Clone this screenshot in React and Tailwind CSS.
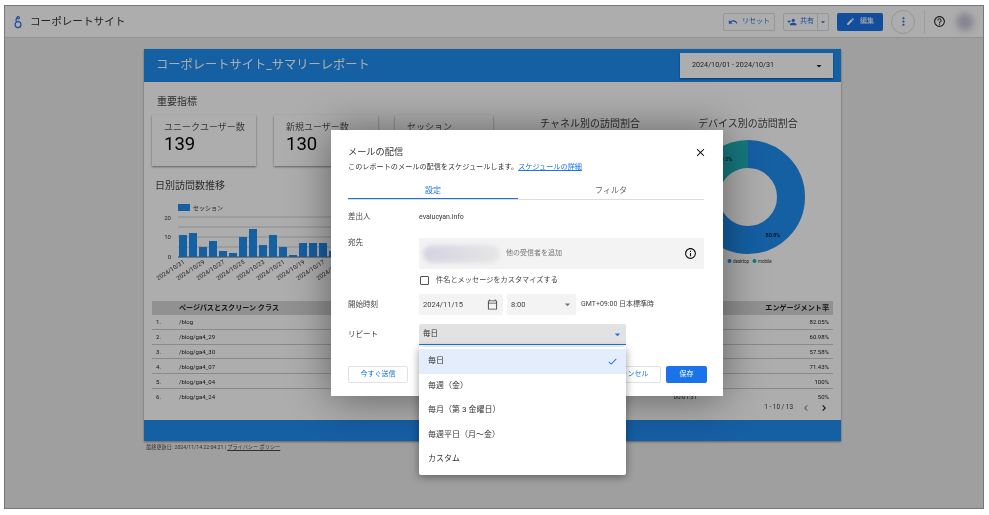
import { MdUndo, MdPersonAdd, MdEdit, MdMoreVert, MdHelpOutline, MdArrowDropDown, MdOutlineCalendarToday, MdClose, MdCheck, MdInfoOutline, MdChevronLeft, MdChevronRight } from 'react-icons/md'

const BLUE = '#1f8df0'
const TEAL = '#1fb3bc'
const bars = [11, 12, 5, 8, 3, 2, 10, 14, 6, 11, 5, 1, 7, 7, 7, 3, 6, 4, 5]
const dates = ['31', '29', '27', '25', '23', '21', '19', '17', '15']
const rows = [
  { path: '/blog', rate: '82.05%' },
  { path: '/blog/ga4_29', rate: '60.98%' },
  { path: '/blog/ga4_30', rate: '57.58%' },
  { path: '/blog/ga4_07', rate: '71.43%' },
  { path: '/blog/ga4_04', rate: '100%' },
  { path: '/blog/ga4_24', time: '00:01:31', rate: '50%' },
]
const options = ['毎日', '毎週（金）', '毎月（第 3 金曜日）', '毎週平日（月～金）', 'カスタム']

function Logo() {
  return (
    <svg width="10" height="14" viewBox="0 0 10 14" fill="none" stroke="#2f6fe0" strokeWidth="1.2" className="ml-[1px] mr-[-1px]">
      <circle cx="5" cy="9.6" r="3" />
      <path d="M3.6 6.8C2.4 5.2 3 3.4 4.6 2.6" />
      <circle cx="5.2" cy="2.8" r="1.2" />
    </svg>
  )
}

function Kpi({ label, value, className }) {
  return (
    <div className={`h-[51px] bg-white shadow-[0_1px_2px_rgba(0,0,0,.45)] pl-3 pt-[6px] ${className}`}>
      <div className="text-[9px] leading-[12px] text-[#555]">{label}</div>
      <div className="text-[18.5px] leading-[22px] text-black">{value}</div>
    </div>
  )
}

function BarChart() {
  return (
    <svg width="378" height="100" viewBox="0 0 378 100" className="block">
      <rect x="26" y="3" width="12" height="7" fill={BLUE} />
      <text x="41" y="9" fontSize="6" fill="#333">セッション</text>
      {[16, 26, 36, 46].map((y) => (
        <line key={y} x1="26" x2="378" y1={y} y2={y} stroke="#c4c4c4" strokeWidth="0.8" />
      ))}
      <line x1="26" x2="378" y1="56" y2="56" stroke="#333" strokeWidth="0.8" />
      <text x="19" y="19" fontSize="6" fill="#333" textAnchor="end">20</text>
      <text x="19" y="38" fontSize="6" fill="#333" textAnchor="end">10</text>
      <text x="19" y="58" fontSize="6" fill="#333" textAnchor="end">0</text>
      {bars.map((v, i) => (
        <rect key={i} x={27 + i * 10} y={56 - v * 2} width="8" height={v * 2} fill={BLUE} />
      ))}
      {dates.map((d, i) => (
        <text key={d} x={33 + i * 20} y="62" fontSize="6" fill="#333" textAnchor="end" transform={`rotate(-33 ${33 + i * 20} 62)`}>
          2024/10/{d}
        </text>
      ))}
    </svg>
  )
}

function Donut() {
  return (
    <svg width="130" height="145" viewBox="0 0 130 145" className="block">
      <g transform="rotate(-90 50 67)">
        <circle cx="50" cy="67" r="43" fill="none" stroke={BLUE} strokeWidth="28" pathLength="100" strokeDasharray="80.8 19.2" />
        <circle cx="50" cy="67" r="43" fill="none" stroke={TEAL} strokeWidth="28" pathLength="100" strokeDasharray="19.2 80.8" strokeDashoffset="-80.8" />
      </g>
      <text x="75" y="107" fontSize="5.5" fill="#000" textAnchor="middle">80.8%</text>
      <text x="27" y="31" fontSize="5.5" fill="#000" textAnchor="middle">19.2%</text>
      <circle cx="31.5" cy="131" r="2" fill={BLUE} />
      <text x="35" y="133" fontSize="4.5" fill="#333">desktop</text>
      <circle cx="56.5" cy="131" r="2" fill={TEAL} />
      <text x="60" y="133" fontSize="4.5" fill="#333">mobile</text>
    </svg>
  )
}

function Report() {
  return (
    <div className="ml-[139px] mt-[11px] w-[697px] bg-white shadow-[0_1px_2px_rgba(0,0,0,.4)]">
      <div className="h-[33px] flex items-center justify-between pl-3 pr-2 bg-[#1f8df0]">
        <div className="text-[12.25px] text-white">コーポレートサイト_サマリーレポート</div>
        <div className="w-[153px] h-[25px] bg-white shadow-[0_1px_2px_rgba(0,0,0,.4)] flex items-center justify-between pl-3 pr-2 text-[7.2px] text-[#333]">
          <span>2024/10/01 - 2024/10/31</span>
          <MdArrowDropDown size={12} className="text-[#222]" />
        </div>
      </div>
      <div className="h-[338px] px-2 flex flex-col">
        <div className="h-[219px] flex">
          <div className="w-[378px] shrink-0">
            <div className="pl-[5px] mt-[14px] text-[10px] leading-[12px] text-[#444]">重要指標</div>
            <div className="mt-[7px] flex">
              <Kpi label="ユニークユーザー数" value="139" className="w-[104px] mr-[18px]" />
              <Kpi label="新規ユーザー数" value="130" className="w-[104px] mr-[17px]" />
              <Kpi label="セッション" value="" className="w-[98px]" />
            </div>
            <div className="pl-[3px] mt-[14px] text-[10px] leading-[12px] text-[#444]">日別訪問数推移</div>
            <div className="mt-[9px]"><BarChart /></div>
          </div>
          <div className="w-[168px] shrink-0 pl-[10px] pt-[36px] text-[10px] leading-[12px] text-[#444]">チャネル別の訪問割合</div>
          <div className="w-[135px] shrink-0 pt-[36px]">
            <div className="text-[10px] leading-[12px] text-[#444]">デバイス別の訪問割合</div>
            <Donut />
          </div>
        </div>
        <div className="h-[14px] bg-[#d6d6d6] flex items-center font-bold text-[7.1px] text-[#222]">
          <span className="w-[27px]" />
          <span className="flex-1">ページパスとスクリーン クラス</span>
          <span className="pr-1">エンゲージメント率</span>
        </div>
        {rows.map((r, i) => (
          <div key={r.path} className={`h-[14.8px] shrink-0 flex items-center text-[6px] text-[#222] ${i < 5 ? 'border-b border-[#ccc]' : ''}`}>
            <span className="w-[27px] pl-1">{i + 1}.</span>
            <span className="flex-1">{r.path}</span>
            <span className="w-[50px] text-right">{r.time}</span>
            <span className="w-[136px] text-right pr-1">{r.rate}</span>
          </div>
        ))}
        <div className="mt-[-2px] flex items-center justify-end text-[6.4px] text-[#333]">
          <span>1 - 10 / 13</span>
          <MdChevronLeft size={12} className="ml-[7px] text-[#888]" />
          <MdChevronRight size={12} className="ml-[6px] mr-[3px] text-[#111]" />
        </div>
      </div>
      <div className="h-[21px] bg-[#1f8df0]" />
    </div>
  )
}

function Toolbar() {
  return (
    <div className="h-[32px] bg-white border-b border-[#d8d8d8] flex items-center pl-[7px]">
      <Logo />
      <div className="ml-[8px] text-[10.6px] text-[#333] flex-1">コーポレートサイト</div>
      <div className="w-[52px] h-[18px] rounded-[2px] border border-[#ddd] flex items-center justify-center gap-1 text-[7px] text-[#2f6fe0]">
        <MdUndo size={10} />リセット
      </div>
      <div className="ml-2 w-[46px] h-[18px] rounded-[2px] border border-[#ddd] flex items-center pl-[3px] text-[7px] text-[#2f6fe0]">
        <MdPersonAdd size={10} /><span className="ml-[3px]">共有</span>
        <span className="ml-[3px] h-full border-l border-[#ddd] flex items-center"><MdArrowDropDown size={10} /></span>
      </div>
      <div className="ml-2 w-[46px] h-[18px] rounded-[2px] bg-[#1a73e8] flex items-center justify-center gap-[5px] text-[7px] text-white">
        <MdEdit size={9} />編集
      </div>
      <div className="ml-2 w-[24px] h-[24px] rounded-full border border-[#ddd] flex items-center justify-center text-[#2f6fe0]">
        <MdMoreVert size={13} />
      </div>
      <div className="ml-[9px] h-[24px] border-l border-[#e8e8e8]" />
      <MdHelpOutline size={13} className="ml-[8px] text-[#333]" />
      <div className="ml-[10px] mr-[9px] w-[18px] h-[18px] rounded-full bg-[#c9c5d6] blur-[3px]" />
    </div>
  )
}

function Label({ children }) {
  return <div className="w-[71px] shrink-0 text-[7.5px] text-[#444]">{children}</div>
}

function RepeatSelect() {
  return (
    <div className="relative w-[207px] h-[21px]">
      <div className="h-full bg-[#e2e2e2] rounded-t-[2px] border-b border-[#1a73e8] flex items-center justify-between pl-1 pr-[2px] text-[7.5px] text-[#333]">
        <span>毎日</span>
        <MdArrowDropDown size={13} className="text-[#1a73e8]" />
      </div>
      <div className="absolute left-0 top-[23px] w-[207px] h-[128px] pt-[2px] bg-white rounded-b-[2px] shadow-[0_2px_8px_rgba(0,0,0,.4)] z-10">
        {options.map((o, i) => (
          <div key={o} className={`h-[24.5px] pl-[9px] pr-2 flex items-center justify-between text-[8px] text-[#333] ${i === 0 ? 'bg-[#e3edfb]' : ''}`}>
            <span>{o}</span>
            {i === 0 && <MdCheck size={11} className="text-[#1a73e8]" />}
          </div>
        ))}
      </div>
    </div>
  )
}

function MailDialog() {
  return (
    <div className="absolute left-[326px] top-[124px] w-[392px] h-[266px] bg-white pl-[17px] pr-[19px] pt-[15px] shadow-[0_2px_40px_rgba(0,0,0,.45)]">
      <div className="h-[14px] flex items-center justify-between">
        <span className="text-[9.2px] text-[#333]">メールの配信</span>
        <MdClose size={13} className="mr-[-3px] text-[#222]" />
      </div>
      <div className="mt-[3px] h-[10px] leading-[10px] text-[7.15px] text-[#333]">
        このレポートのメールの配信をスケジュールします。<span className="text-[#1a73e8] underline">スケジュールの詳細</span>
      </div>
      <div className="mt-[11px] h-[17px] flex border-b border-[#ddd] text-[8px]">
        <div className="w-[170px] h-[16px] pt-[2px] border-b-[1.5px] border-[#1a73e8] text-center text-[#1a73e8]">設定</div>
        <div className="flex-1 pt-[2px] text-center text-[#666]">フィルタ</div>
      </div>
      <div className="mt-[11px] h-[12px] flex items-center">
        <Label>差出人</Label>
        <span className="text-[7px] text-[#333]">evalucyan.info</span>
      </div>
      <div className="mt-[15px] h-[31px] flex">
        <div className="mt-[-1px]"><Label>宛先</Label></div>
        <div className="flex-1 bg-[#f3f3f3] flex items-center pl-1 pr-[7px] text-[7px] text-[#777]">
          <div className="w-[77px] h-[18px] rounded-full bg-gradient-to-r from-[#d6d3e2] to-[#e6e6e6] blur-[2px]" />
          <span className="ml-[6px] flex-1">他の受信者を追加</span>
          <MdInfoOutline size={13} className="text-[#111]" />
        </div>
      </div>
      <div className="mt-[5px] h-[13px] flex items-center pl-[72px]">
        <div className="w-[9px] h-[9px] border border-[#555] rounded-[1px]" />
        <span className="ml-[7px] text-[7.2px] text-[#444]">件名とメッセージをカスタマイズする</span>
      </div>
      <div className="mt-[7px] h-[21px] flex items-center">
        <Label>開始時刻</Label>
        <div className="w-[84px] h-full bg-[#f3f3f3] rounded-[2px] flex items-center justify-between pl-1 pr-[5px] text-[7.5px] text-[#444]">
          <span>2024/11/15</span>
          <MdOutlineCalendarToday size={11} className="text-[#444]" />
        </div>
        <div className="ml-[4px] w-[69px] h-full bg-[#f3f3f3] rounded-[2px] flex items-center justify-between pl-1 pr-[2px] text-[7.5px] text-[#444]">
          <span>8:00</span>
          <MdArrowDropDown size={13} className="text-[#777]" />
        </div>
        <span className="ml-[5px] text-[7px] text-[#444]">GMT+09:00 日本標準時</span>
      </div>
      <div className="mt-[9px] h-[21px] flex items-center">
        <Label>リピート</Label>
        <RepeatSelect />
      </div>
      <div className="mt-[21px] mr-[-3px] h-[17px] flex items-center text-[7px]">
        <div className="w-[60px] h-full border border-[#e2e2e2] rounded-[2px] flex items-center justify-center text-[#1a73e8]">今すぐ送信</div>
        <div className="ml-auto w-[60px] h-full border border-[#e2e2e2] rounded-[2px] flex items-center justify-center text-[#1a73e8]">キャンセル</div>
        <div className="ml-[5px] w-[41px] h-full rounded-[2px] bg-[#1a73e8] flex items-center justify-center text-white">保存</div>
      </div>
    </div>
  )
}

export default function App() {
  return (
    <div className="w-[989px] h-[515px] bg-white pl-[4px] pt-[5px] pr-[5px] pb-[6px] overflow-hidden font-['Roboto','Noto_Sans_CJK_JP',sans-serif] blur-[0.4px]">
      <div className="relative h-full border border-[#777] bg-[#ebebeb] overflow-hidden">
        <Toolbar />
        <Report />
        <div className="mt-[3px] ml-[141px] text-[5.2px] text-[#444]">
          最終更新日: 2024/11/14 22:04:21 | <span className="underline">プライバシー ポリシー</span>
        </div>
        <div className="absolute inset-0 bg-black/[0.32]" />
        <MailDialog />
      </div>
    </div>
  )
}
